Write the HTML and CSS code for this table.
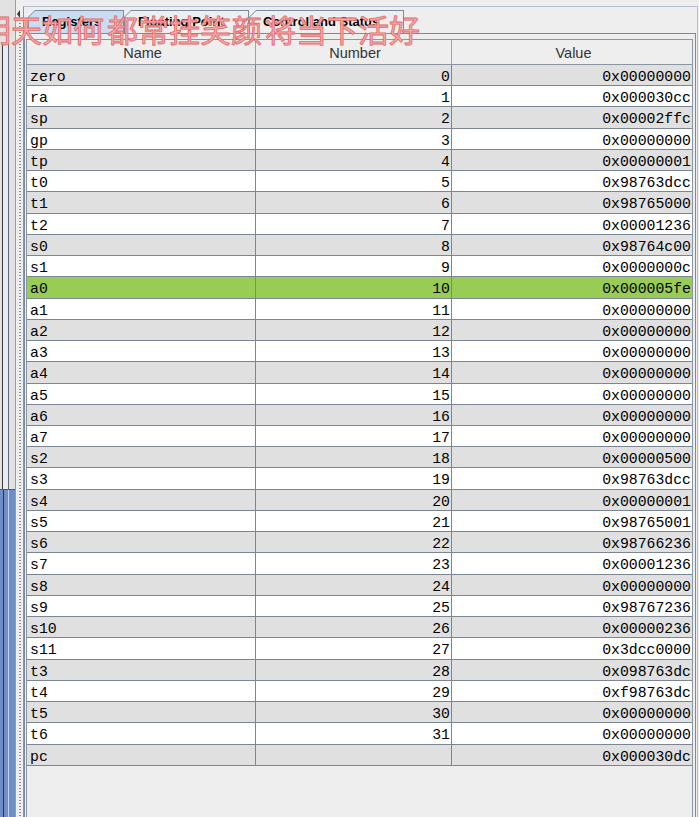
FILE: index.html
```html
<!DOCTYPE html>
<html>
<head>
<meta charset="utf-8">
<title>Registers</title>
<link rel="stylesheet" href="styles.css">
</head>
<body>
<div class="app">
  <div class="side">
    <div class="dock">
      <div class="dock-top"><div class="dock-frame"></div></div>
      <div class="dock-bottom"><div class="dock-bottom-inner"></div></div>
    </div>
    <div class="splitter">
      <svg class="split-arrow" width="5" height="10" viewBox="0 0 5 10"><path d="M4 1 L1 5 L4 9 Z" fill="#333"/></svg>
      <div class="grip"></div>
    </div>
  </div>
  <div class="main">
    <div class="tabs">
      <div class="tab sel"><div class="tab-in">Registers</div></div>
      <div class="tab"><div class="tab-in">Floating Point</div></div>
      <div class="tab"><div class="tab-in">Control and Status</div></div>
    </div>
    <div class="panel">
      <div class="scroll">
        <div class="row head">
          <div class="c">Name</div><div class="c">Number</div><div class="c">Value</div>
        </div>
        <div class="row g"><div class="c n">zero</div><div class="c num">0</div><div class="c v">0x00000000</div></div>
        <div class="row w"><div class="c n">ra</div><div class="c num">1</div><div class="c v">0x000030cc</div></div>
        <div class="row g"><div class="c n">sp</div><div class="c num">2</div><div class="c v">0x00002ffc</div></div>
        <div class="row w"><div class="c n">gp</div><div class="c num">3</div><div class="c v">0x00000000</div></div>
        <div class="row g"><div class="c n">tp</div><div class="c num">4</div><div class="c v">0x00000001</div></div>
        <div class="row w"><div class="c n">t0</div><div class="c num">5</div><div class="c v">0x98763dcc</div></div>
        <div class="row g"><div class="c n">t1</div><div class="c num">6</div><div class="c v">0x98765000</div></div>
        <div class="row w"><div class="c n">t2</div><div class="c num">7</div><div class="c v">0x00001236</div></div>
        <div class="row g"><div class="c n">s0</div><div class="c num">8</div><div class="c v">0x98764c00</div></div>
        <div class="row w"><div class="c n">s1</div><div class="c num">9</div><div class="c v">0x0000000c</div></div>
        <div class="row hl"><div class="c n">a0</div><div class="c num">10</div><div class="c v">0x000005fe</div></div>
        <div class="row w"><div class="c n">a1</div><div class="c num">11</div><div class="c v">0x00000000</div></div>
        <div class="row g"><div class="c n">a2</div><div class="c num">12</div><div class="c v">0x00000000</div></div>
        <div class="row w"><div class="c n">a3</div><div class="c num">13</div><div class="c v">0x00000000</div></div>
        <div class="row g"><div class="c n">a4</div><div class="c num">14</div><div class="c v">0x00000000</div></div>
        <div class="row w"><div class="c n">a5</div><div class="c num">15</div><div class="c v">0x00000000</div></div>
        <div class="row g"><div class="c n">a6</div><div class="c num">16</div><div class="c v">0x00000000</div></div>
        <div class="row w"><div class="c n">a7</div><div class="c num">17</div><div class="c v">0x00000000</div></div>
        <div class="row g"><div class="c n">s2</div><div class="c num">18</div><div class="c v">0x00000500</div></div>
        <div class="row w"><div class="c n">s3</div><div class="c num">19</div><div class="c v">0x98763dcc</div></div>
        <div class="row g"><div class="c n">s4</div><div class="c num">20</div><div class="c v">0x00000001</div></div>
        <div class="row w"><div class="c n">s5</div><div class="c num">21</div><div class="c v">0x98765001</div></div>
        <div class="row g"><div class="c n">s6</div><div class="c num">22</div><div class="c v">0x98766236</div></div>
        <div class="row w"><div class="c n">s7</div><div class="c num">23</div><div class="c v">0x00001236</div></div>
        <div class="row g"><div class="c n">s8</div><div class="c num">24</div><div class="c v">0x00000000</div></div>
        <div class="row w"><div class="c n">s9</div><div class="c num">25</div><div class="c v">0x98767236</div></div>
        <div class="row g"><div class="c n">s10</div><div class="c num">26</div><div class="c v">0x00000236</div></div>
        <div class="row w"><div class="c n">s11</div><div class="c num">27</div><div class="c v">0x3dcc0000</div></div>
        <div class="row g"><div class="c n">t3</div><div class="c num">28</div><div class="c v">0x098763dc</div></div>
        <div class="row w"><div class="c n">t4</div><div class="c num">29</div><div class="c v">0xf98763dc</div></div>
        <div class="row g"><div class="c n">t5</div><div class="c num">30</div><div class="c v">0x00000000</div></div>
        <div class="row w"><div class="c n">t6</div><div class="c num">31</div><div class="c v">0x00000000</div></div>
        <div class="row g"><div class="c n">pc</div><div class="c num"></div><div class="c v">0x000030dc</div></div>
      </div>
    </div>
  </div>
</div>
<div class="watermark">明天如何 都常挂笑颜 将当下活好</div>
</body>
</html>
```

FILE: styles.css
```css
* { box-sizing: border-box; }
html, body { margin: 0; padding: 0; }
body {
  width: 699px;
  height: 817px;
  overflow: hidden;
  background: #eeeeee;
  font-family: "Liberation Sans", Arial, sans-serif;
  position: relative;
}
.app { display: flex; height: 817px; }

/* left strip */
.side { width: 23px; flex-shrink: 0; display: flex; }
.dock {
  width: 16px;
  display: flex;
  flex-direction: column;
  border-right: 1px solid #9c9c9c;
}
.dock-top {
  height: 489px;
  padding: 43px 0 0 2px;
  background: #e2e2e2;
}
.dock-frame {
  height: 100%;
  width: 7px;
  border-left: 1px solid #3c3c3c;
  border-right: 1px solid #5b6a80;
  border-top: 1px solid #8a8a8a;
  background: #ebebeb;
}
.dock-bottom {
  flex: 1;
  border-top: 1px solid #4d5a70;
  background: #6f8ec6;
  padding-left: 3px;
}
.dock-bottom-inner {
  height: 100%;
  width: 6px;
  border-left: 1px solid #24345a;
  border-right: 1px solid #c4d4ee;
}
.splitter {
  width: 7px;
  display: flex;
  flex-direction: column;
  align-items: flex-start;
  padding: 9px 0 0 0;
}
.split-arrow { display: block; margin-left: 0; }
.grip {
  flex: 1;
  width: 2px;
  margin: 4px 0 0 3px;
  background-image:
    repeating-linear-gradient(to bottom, #8e8e8e 0 1px, transparent 1px 3px);
}

/* main tabbed pane */
.main {
  flex: 1;
  margin: 6px 1px 0 0;
  border-top: 1px solid #b8c2cf;
  border-left: 1px solid #8696ab;
  border-right: 1px solid #b8c2cf;
  padding: 3px 1px 0 0;
  display: flex;
  flex-direction: column;
}
.tabs {
  height: 23px;
  display: flex;
  padding-left: 4px;
}
.tab {
  background: #7b8a9c;
  clip-path: polygon(0 100%, 0 7px, 7px 0, 100% 0, 100% 100%);
  padding: 1px 1px 0 1px;
  width: 125px;
}
.tab:first-child { width: 96px; }
.tab:last-child { width: 155px; }
.tab-in {
  height: 100%;
  background: #eeeeee;
  clip-path: polygon(0 100%, 0 6px, 6px 0, 100% 0, 100% 100%);
  font-size: 13px;
  font-weight: bold;
  color: #000;
  line-height: 21px;
  padding-left: 13px;
  white-space: nowrap;
}
.tab.sel .tab-in { background: #c8ddf2; }

.panel {
  flex: 1;
  border: 1px solid #7b8aa1;
  border-bottom: none;
  padding: 5px 2px 0 1px;
  display: flex;
  flex-direction: column;
}
.scroll {
  flex: 1;
  border: 1px solid #8a96a3;
  border-bottom: none;
  background: #eeeeee;
}
.row {
  display: grid;
  grid-template-columns: 228px 196px 1fr;
  height: 21.24px;
  border-bottom: 1px solid #7a8693;
}
.row .c + .c { border-left: 1px solid #7a8693; }
.row.head {
  height: 25px;
  background: #eeeeee;
  border-bottom: 1px solid #8a96a3;
}
.row.head .c {
  text-align: center;
  font-family: "Liberation Sans", Arial, sans-serif;
  font-size: 14.5px;
  color: #333;
  line-height: 26px;
  padding: 0 0 0 3px;
}
.row.head .c + .c { border-left-color: #9aa4af; }
.row.g { background: #e0e0e0; }
.row.w { background: #ffffff; }
.row.hl { background: #99cc55; }
.c {
  font-family: "Liberation Mono", "Courier New", monospace;
  font-size: 14.8px;
  color: #000;
  line-height: 22px;
  padding-top: 1px;
  white-space: nowrap;
  overflow: hidden;
}
.c.n { padding-left: 3px; }
.c.num { text-align: right; padding-right: 1px; }
.c.v { text-align: right; padding-right: 1px; }

.watermark {
  position: absolute;
  left: -20px;
  top: 13px;
  font-family: "Noto Sans CJK SC", sans-serif;
  font-size: 31px;
  line-height: 31px;
  word-spacing: -4px;
  white-space: nowrap;
  color: #f6a9a9;
  -webkit-text-stroke: 0.8px #e06a6a;
}
```
